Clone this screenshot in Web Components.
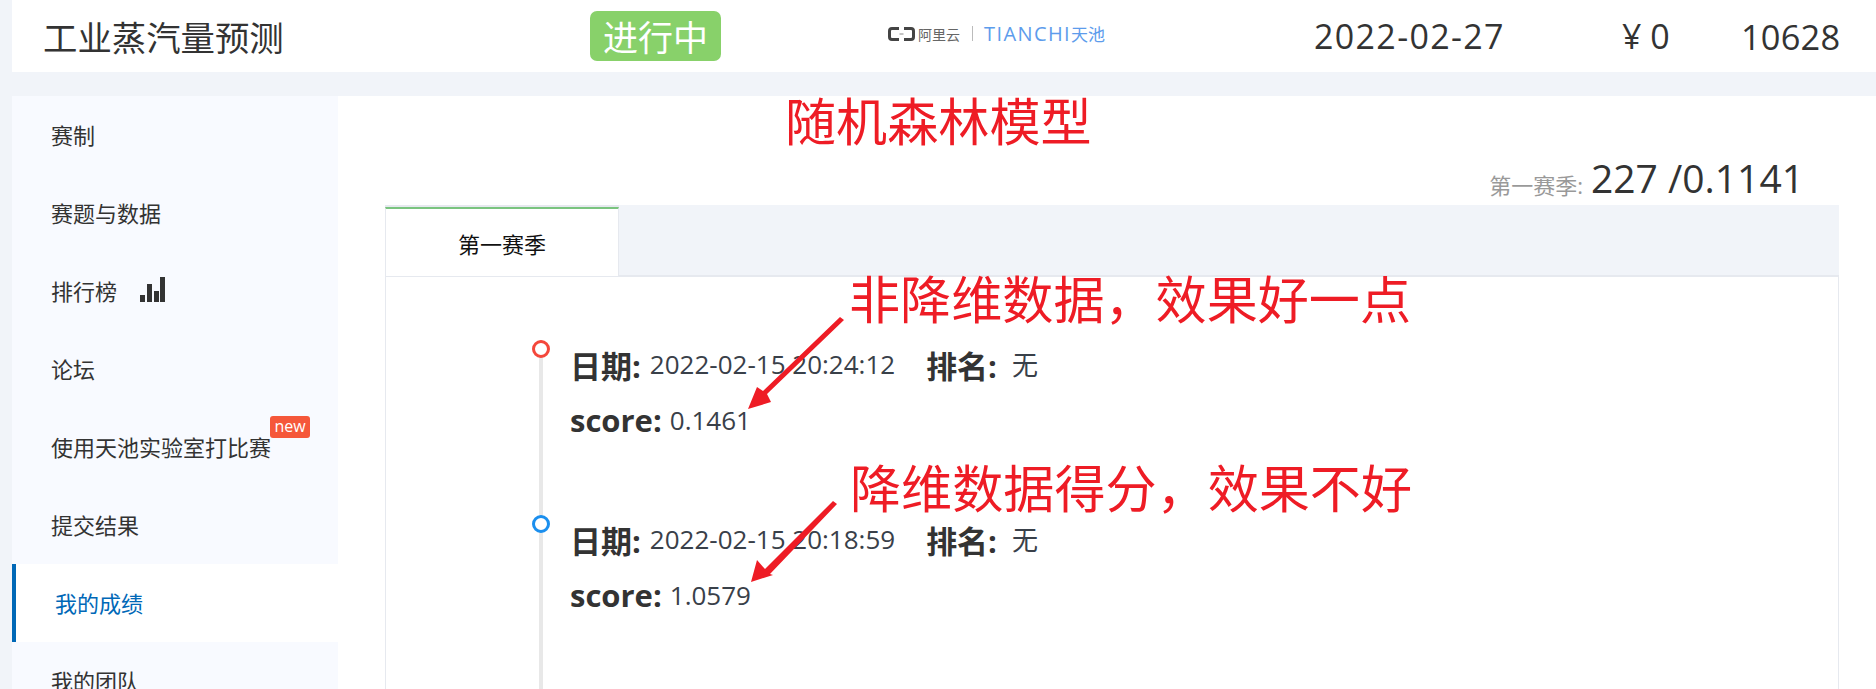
<!DOCTYPE html>
<html lang="zh">
<head>
<meta charset="utf-8">
<title>工业蒸汽量预测</title>
<style>
  html, body { margin: 0; height: 100%; overflow: hidden; background: #f1f4f9; }
  body { position: relative; font-family: "Open Sans", "Noto Sans CJK SC", sans-serif; color: #333; }
  .page { display: grid; grid-template-rows: 72px 1fr; row-gap: 24px; height: 689px; padding-left: 12px; box-sizing: border-box; }
  .body { display: grid; grid-template-columns: 326px 1fr; min-height: 0; overflow: hidden; }
</style>
</head>
<body>
<div class="page">
  <race-header></race-header>
  <div class="body">
    <side-nav>
      <nav-item>赛制</nav-item>
      <nav-item>赛题与数据</nav-item>
      <nav-item icon="bars">排行榜</nav-item>
      <nav-item>论坛</nav-item>
      <nav-item badge="new">使用天池实验室打比赛</nav-item>
      <nav-item>提交结果</nav-item>
      <nav-item active>我的成绩</nav-item>
      <nav-item>我的团队</nav-item>
    </side-nav>
    <score-panel>
      <score-entry color="#f4473b" date="2022-02-15 20:24:12" rank="无" score="0.1461"></score-entry>
      <score-entry color="#1b8fee" date="2022-02-15 20:18:59" rank="无" score="1.0579"></score-entry>
    </score-panel>
  </div>
</div>
<red-notes></red-notes>

<script>
const FONT = `"Open Sans", "Noto Sans CJK SC", sans-serif`;

class RaceHeader extends HTMLElement {
  constructor() {
    super();
    this.attachShadow({ mode: "open" });
  }
  connectedCallback() {
    this.shadowRoot.innerHTML = `
      <style>
        :host { display: flex; align-items: center; background: #fff; font-family: ${FONT}; color: #333; padding-left: 31px; }
        .title { font-size: 34.400px; width: 547px; }
        .badge { width: 131px; height: 50px; margin-top: -1px; border-radius: 7px; background: #88d16a; color: #fff; font-size: 35px; display: flex; align-items: center; justify-content: center; }
        .logo { display: flex; align-items: center; margin-left: 167px; width: 426px; height: 40px; margin-top: -5px; }
        .ali { font-size: 14px; color: #666; margin-left: 3px; }
        .sep { width: 1px; height: 15px; background: #bbb; margin: 0 11px 0 12px; }
        .tc { font-size: 20px; color: #5d9cec; letter-spacing: 1.400px; }
        .tc2 { font-size: 17px; color: #5d9cec; margin-left: 0; }
        .date { font-size: 34px; width: 308px; letter-spacing: 1.350px; }
        .fee { font-size: 34px; width: 119px; }
        .num { font-size: 34.400px; letter-spacing: 0.200px; }
      </style>
      <div class="title">工业蒸汽量预测</div>
      <div class="badge">进行中</div>
      <div class="logo">
        <svg width="27" height="14" viewBox="0 0 27 14">
          <path d="M11 1.500H4Q1.500 1.500 1.500 4V10Q1.500 12.500 4 12.500H11M16 1.500H23Q25.500 1.500 25.500 4V10Q25.500 12.500 23 12.500H16" fill="none" stroke="#444" stroke-width="3"/>
          <path d="M11.500 7H15.500" stroke="#888" stroke-width="1"/>
        </svg>
        <span class="ali">阿里云</span><span class="sep"></span><span class="tc">TIANCHI</span><span class="tc2">天池</span>
      </div>
      <div class="date">2022-02-27</div>
      <div class="fee">¥ 0</div>
      <div class="num">10628</div>`;
  }
}

class SideNav extends HTMLElement {
  constructor() {
    super();
    this.attachShadow({ mode: "open" });
    this.shadowRoot.innerHTML = `
      <style>
        :host { display: flex; flex-direction: column; background: #f8faff; overflow: hidden; }
      </style>
      <slot></slot>`;
  }
}

class NavItem extends HTMLElement {
  constructor() {
    super();
    this.attachShadow({ mode: "open" });
  }
  connectedCallback() {
    const bars = this.getAttribute("icon") === "bars" ? `
      <svg class="bars" width="25" height="25" viewBox="0 0 25 25" fill="#333">
        <rect x="0" y="18" width="5" height="7"/><rect x="7" y="7" width="5" height="18"/>
        <rect x="14" y="14" width="5" height="11"/><rect x="20" y="0" width="5" height="25"/>
      </svg>` : "";
    const badge = this.getAttribute("badge");
    this.shadowRoot.innerHTML = `
      <style>
        :host { display: flex; flex: none; align-items: center; height: 78px; box-sizing: border-box; padding: 0 0 2px 39px; font-family: ${FONT}; font-size: 22px; color: #333; position: relative; }
        :host([active]) { background: #fff; color: #0068b7; border-left: 4px solid #0068b7; padding-left: 39px; }
        .bars { margin-left: 23px; margin-top: -2px; }
        .new { position: absolute; left: 258px; top: 8px; width: 40px; height: 22px; border-radius: 3px; background: #f5573a; color: #fff; font-size: 16px; line-height: 21px; text-align: center; }
      </style>
      <slot></slot>${bars}${badge ? `<span class="new">${badge}</span>` : ""}`;
  }
}

class ScorePanel extends HTMLElement {
  constructor() {
    super();
    this.attachShadow({ mode: "open" });
    this.shadowRoot.innerHTML = `
      <style>
        :host { display: flex; flex-direction: column; background: #fff; padding: 0 37px 0 47px; font-family: ${FONT}; color: #333; min-height: 0; overflow: hidden; }
        .sum { height: 109px; flex: none; box-sizing: border-box; display: flex; justify-content: flex-end; align-items: flex-end; padding-right: 35px; padding-bottom: 2px; }
        .sum small { font-size: 22px; color: #999; margin: 0 8px -2px 0; line-height: 40px; }
        .sum b { font-size: 39px; font-weight: 400; line-height: 50px; }
        .tabs { display: flex; height: 72px; flex: none; background: #f1f4f9; box-sizing: border-box; border-bottom: 2px solid #e6e9ef; }
        .tab { width: 234px; box-sizing: border-box; margin-bottom: -1px; background: #fff; border: 1px solid #e6e9ef; border-top: 2px solid #7ac47f; border-bottom: 0; box-shadow: 0 -2px 0 #e6e9ef; margin-top: 2px; display: flex; align-items: center; justify-content: center; font-size: 22px; color: #111; }
        .list { flex: 1 0 auto; border: 1px solid #e6e9ef; border-top: 0; padding: 63px 0 0 153px; display: flex; flex-direction: column; }
      </style>
      <div class="sum"><small>第一赛季:</small><b>227 /0.1141</b></div>
      <div class="tabs"><div class="tab">第一赛季</div></div>
      <div class="list"><slot></slot></div>`;
  }
}

class ScoreEntry extends HTMLElement {
  constructor() {
    super();
    this.attachShadow({ mode: "open" });
  }
  connectedCallback() {
    const color = this.getAttribute("color");
    this.shadowRoot.innerHTML = `
      <style>
        :host { display: block; position: relative; height: 175px; border-left: 4px solid #e8e8e8; padding-left: 27px; font-family: ${FONT}; color: #333; }
        :host(:last-child) { height: 300px; }
        .dot { position: absolute; left: -11px; top: 0; width: 18px; height: 18px; box-sizing: border-box; border: 3.500px solid ${color}; border-radius: 50%; background: #fff; }
        .row { display: flex; align-items: center; height: 50px; font-size: 26px; color: #394049; }
        .row:first-of-type { margin-top: -1px; }
        .row + .row { margin-top: 6px; }
        b { font-size: 31px; font-weight: 700; color: #333; margin-right: 9px; }
        .row + .row b { margin-right: 8px; }
        .rank { margin: 0 15px 0 31px; }
      </style>
      <span class="dot"></span>
      <div class="row"><b>日期:</b>${this.getAttribute("date")}<b class="rank">排名:</b>${this.getAttribute("rank")}</div>
      <div class="row"><b>score:</b>${this.getAttribute("score")}</div>`;
  }
}

class RedNotes extends HTMLElement {
  constructor() {
    super();
    this.attachShadow({ mode: "open" });
    this.shadowRoot.innerHTML = `
      <style>
        :host { position: absolute; inset: 0; pointer-events: none; font-family: "Noto Sans CJK SC", sans-serif; color: #ee1c25; }
        span { position: absolute; font-size: 51.100px; line-height: 60px; white-space: nowrap; }
        svg { position: absolute; left: 0; top: 0; }
      </style>
      <span style="left:785px;top:89px">随机森林模型</span>
      <span style="left:849px;top:267px">非降维数据，效果好一点</span>
      <span style="left:850px;top:456px">降维数据得分，效果不好</span>
      <svg width="1876" height="689" viewBox="0 0 1876 689" fill="#ee1c25" stroke="none">
        <path d="M840 317L844 320L767 394L771 402L748 409L757 387L763 391Z"/>
        <path d="M833 501L837 504L770 574L773 575L751 582L757 560L765 569Z"/>
      </svg>`;
  }
}

customElements.define("race-header", RaceHeader);
customElements.define("side-nav", SideNav);
customElements.define("nav-item", NavItem);
customElements.define("score-panel", ScorePanel);
customElements.define("score-entry", ScoreEntry);
customElements.define("red-notes", RedNotes);
</script>
</body>
</html>
